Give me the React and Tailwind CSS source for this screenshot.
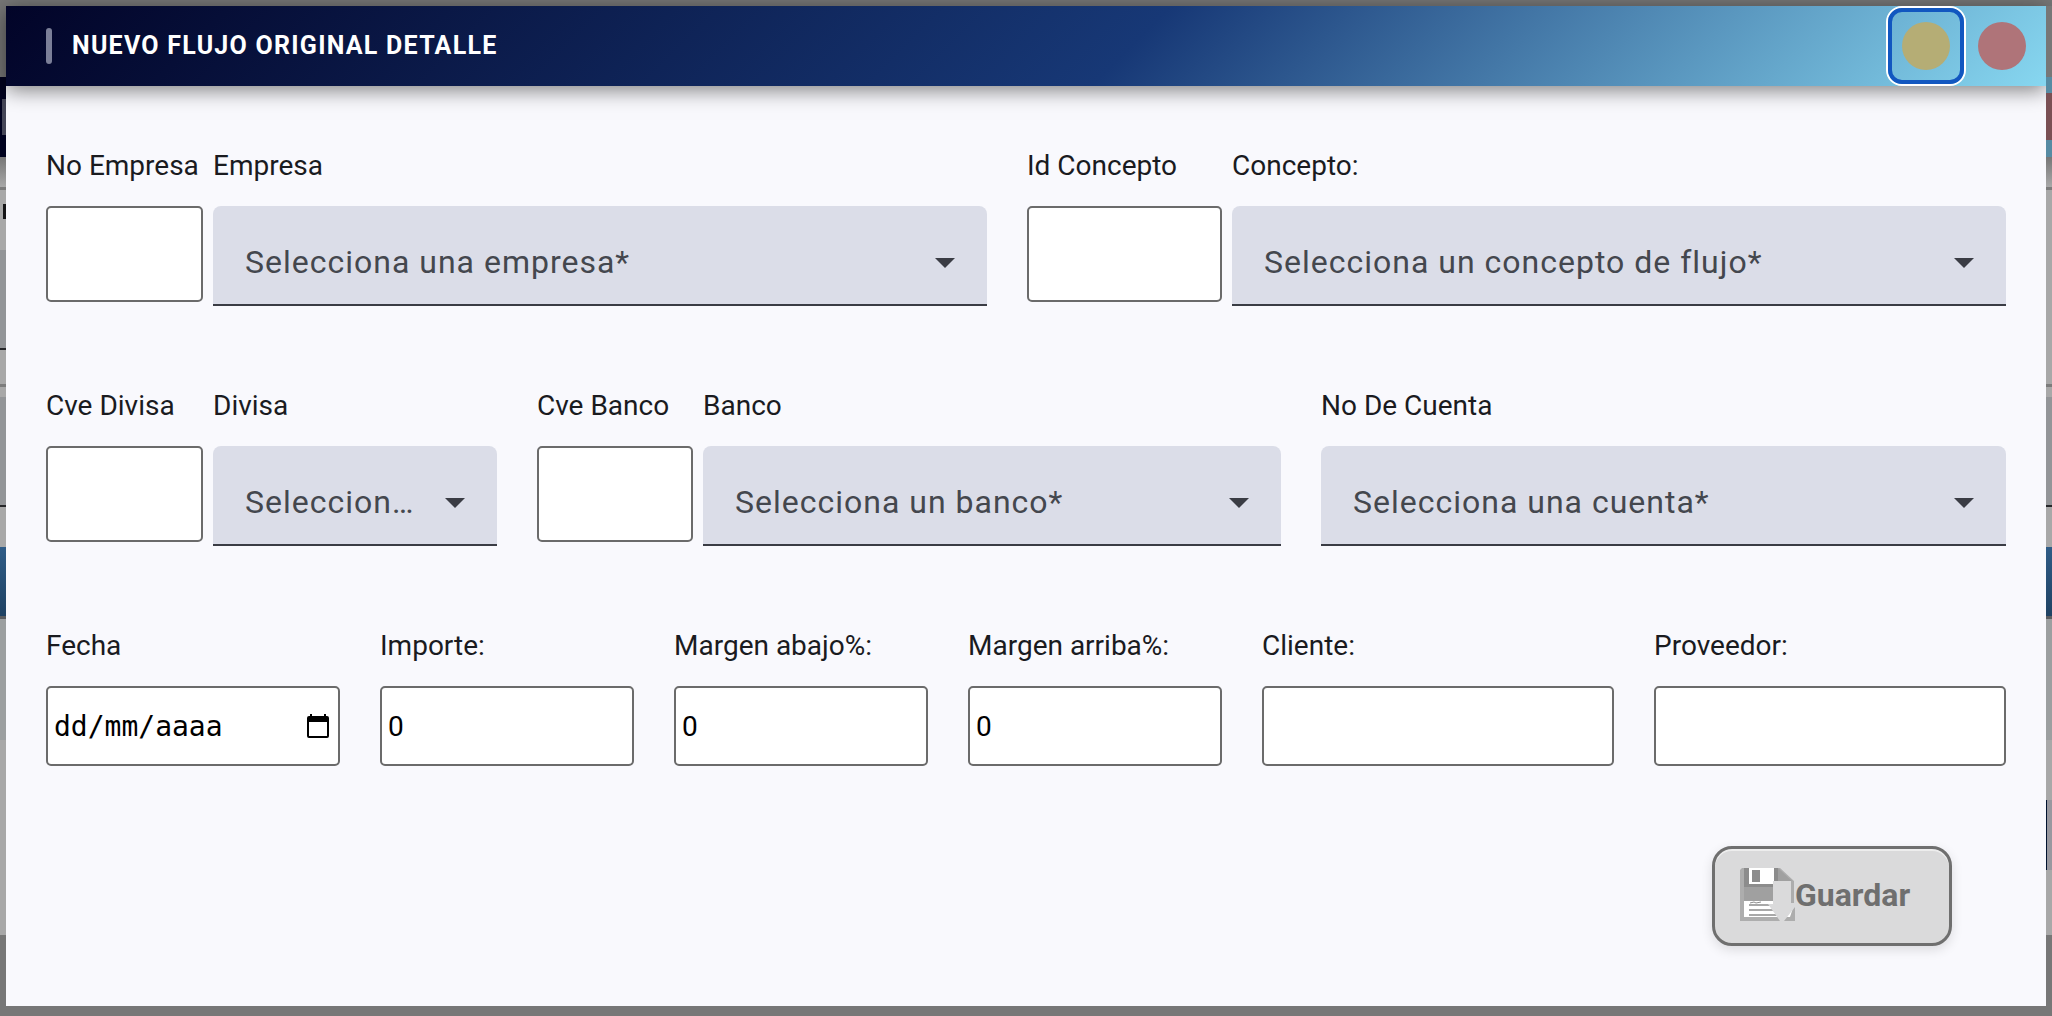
import React from "react";
import { clsx } from "clsx";

// Slices of the dimmed page that stay visible on both sides of the dialog
const leftEdge = [
  "h-[71px] bg-[#777777]",
  "h-[22px] bg-[#00021f]",
  "h-9 border-l-2 border-[#00021f] bg-[#454657]",
  "h-[22px] bg-[#00021f]",
  "h-[30px] bg-linear-to-b from-[#777777] to-[#a8a8a8]",
  "h-[3px] bg-[#7c7c7c]",
  "h-[14px] bg-[#a8a8a8]",
  "h-[15px] border-l-3 border-[#a8a8a8] bg-[#151517]",
  "h-[31px] bg-[#a8a8a8]",
  "h-[98px] bg-[#939598]",
  "h-[2px] bg-[#26272a]",
  "h-[34px] bg-[#a8a8a8]",
  "h-[3px] bg-[#7c7c7c]",
  "h-[10px] bg-[#a8a8a8]",
  "h-[108px] bg-[#939598]",
  "h-[2px] bg-[#26272a]",
  "h-10 bg-[#a8a8a8]",
  "h-[69px] bg-linear-to-b from-[#2f5c87] to-[#1f4263]",
  "h-[3px] bg-[#5b5d60]",
  "h-[121px] bg-[#9c9fa0]",
  "h-[195px] bg-[#a8a8a8]",
  "grow bg-[#777777]",
];

const rightEdge = [
  "h-[71px] bg-[#777777]",
  "h-4 bg-[#568ba3]",
  "h-[47px] bg-[#7a5054]",
  "h-[17px] bg-[#568ba3]",
  "h-[30px] bg-linear-to-b from-[#777777] to-[#a8a8a8]",
  "h-[3px] bg-[#7c7c7c]",
  "h-[194px] bg-[#a8a8a8]",
  "h-[3px] bg-[#7c7c7c]",
  "h-[10px] bg-[#a8a8a8]",
  "h-[108px] bg-[#939598]",
  "h-[2px] bg-[#26272a]",
  "h-10 bg-[#a8a8a8]",
  "h-[69px] bg-linear-to-b from-[#2f5c87] to-[#1f4263]",
  "h-[3px] bg-[#5b5d60]",
  "h-[121px] bg-[#9c9fa0]",
  "h-[60px] bg-[#a8a8a8]",
  "h-[70px] border-l border-[#00132f] bg-[#98989f]",
  "h-[65px] bg-[#a8a8a8]",
  "grow bg-[#777777]",
];

const PageEdge = ({ slices }) => (
  <div className="flex w-[6px] shrink-0 flex-col" aria-hidden="true">
    {slices.map((slice, idx) => (
      <div key={idx} className={slice} />
    ))}
  </div>
);

const Field = ({ id, label, className, children }) => (
  <div className={clsx("flex min-w-0 flex-col gap-[22px]", className)}>
    <label htmlFor={id} className="text-[28px] leading-9 whitespace-nowrap">
      {label}
    </label>
    {children}
  </div>
);

const TextInput = ({ id, tall, ...props }) => (
  <input
    id={id}
    type="text"
    className={clsx(
      "w-full rounded-[5px] border-2 border-[#6b6b6b] bg-white px-[6px] text-[28px] text-black",
      tall ? "h-24" : "h-20"
    )}
    {...props}
  />
);

const SelectInput = ({ id, placeholder }) => (
  <div className="grid">
    <select
      id={id}
      defaultValue=""
      className="col-start-1 row-start-1 h-[100px] w-full appearance-none truncate rounded-t-lg border-b-2 border-[#3a3c44] bg-[#dbdde8] pt-[14px] pr-20 pl-8 text-[32px] tracking-[1px] text-[#44474e]"
    >
      <option value="">{placeholder}</option>
    </select>
    <svg
      className="pointer-events-none col-start-1 row-start-1 mt-[14px] mr-8 h-[10px] w-5 self-center justify-self-end"
      viewBox="0 0 20 10"
      aria-hidden="true"
    >
      <path d="M0 0h20L10 10z" fill="#3a3c44" />
    </svg>
  </div>
);

const DateInput = ({ id }) => (
  <div className="flex h-20 w-full items-center rounded-[5px] border-2 border-[#6b6b6b] bg-white pr-[9px] pl-[6px]">
    <input
      id={id}
      type="text"
      placeholder="dd/mm/aaaa"
      className="w-full min-w-0 grow bg-transparent pt-[2px] font-['DejaVu_Sans_Mono','Liberation_Mono',monospace] text-[28px] text-black placeholder:text-black"
    />
    <button type="button" aria-label="Abrir calendario" className="shrink-0">
      <svg className="h-6 w-[22px]" viewBox="0 0 22 24" aria-hidden="true">
        <path
          d="M3 0h2v2h12V0h2v2h1a2 2 0 0 1 2 2v18a2 2 0 0 1-2 2H2a2 2 0 0 1-2-2V4a2 2 0 0 1 2-2h1zM2 8v14h18V8z"
          fill="#000"
          fillRule="evenodd"
        />
      </svg>
    </button>
  </div>
);

const SaveIcon = () => (
  <svg className="h-[54px] w-[55px] shrink-0" viewBox="0 0 55 54" aria-hidden="true">
    <path d="M2 0h38l14 13v22h1v18H0V2z" fill="#adadad" />
    <path d="M4 19h29v14H4z" fill="#a0a0a0" />
    <path d="M4 0h5v16h29v3H4zM34 0h4v13h-4z" fill="#8c8c8c" />
    <path d="M38 0l14 13H38z" fill="#a0a0a0" />
    <path d="M9 0h25v16H9z" fill="#fff" />
    <path d="M12 2h8v12h-8z" fill="#8c8c8c" />
    <path d="M4 33h40l10 4-4 12H4z" fill="#fff" />
    <path d="M9 37h22M9 42h26M9 47h28" stroke="#8c8c8c" strokeWidth="1.5" />
    <path d="M10 35l4-1 2 1 5-1" stroke="#8c8c8c" fill="none" />
    <path d="M33 13h18v22h4v4L44 53h-4L28 36h5z" fill="#dadadb" />
  </svg>
);

const App = () => {
  return (
    <div className="flex min-h-screen flex-col bg-[#777777] font-[Roboto,sans-serif] text-[#1a1b1f]">
      <div className="h-[6px]" />
      <div className="flex grow">
        <PageEdge slices={leftEdge} />

        <div role="dialog" aria-labelledby="titulo" className="flex min-w-0 grow flex-col bg-[#f9f9fd]">
          {/* Header */}
          <header className="flex h-20 shrink-0 items-center justify-between bg-linear-[135deg,#020428_0%,#173876_55%,#87d7f0_100%] pl-10 shadow-[0_4px_20px_rgba(0,0,0,0.5)]">
            <div className="flex items-center gap-5">
              <span className="h-9 w-[6px] rounded-[3px] bg-[#7b7f98]" />
              <h2 id="titulo" className="text-[25px] leading-10 font-bold tracking-wider text-white">
                NUEVO FLUJO ORIGINAL DETALLE
              </h2>
            </div>
            <div className="flex items-center">
              <button
                type="button"
                aria-label="Minimizar"
                className="flex size-20 items-center justify-center rounded-2xl border-2 border-white"
              >
                <span className="flex size-full items-center justify-center rounded-[14px] border-4 border-[#1257c0]">
                  <span className="size-12 rounded-full bg-[#b5ad75]" />
                </span>
              </button>
              <button type="button" aria-label="Cerrar" className="mr-5 ml-3 size-12 rounded-full bg-[#af7479]" />
            </div>
          </header>

          {/* Form */}
          <form className="flex flex-col px-10 pt-[62px]">
            <div className="flex gap-10">
              <div className="flex min-w-0 flex-[941] gap-[10px]">
                <Field id="noEmpresa" label="No Empresa" className="flex-[157]">
                  <TextInput id="noEmpresa" tall />
                </Field>
                <Field id="empresa" label="Empresa" className="flex-[774]">
                  <SelectInput id="empresa" placeholder="Selecciona una empresa*" />
                </Field>
              </div>
              <div className="flex min-w-0 flex-[979] gap-[10px]">
                <Field id="idConcepto" label="Id Concepto" className="flex-[195]">
                  <TextInput id="idConcepto" tall />
                </Field>
                <Field id="concepto" label="Concepto:" className="flex-[774]">
                  <SelectInput id="concepto" placeholder="Selecciona un concepto de flujo*" />
                </Field>
              </div>
            </div>

            <div className="mt-[82px] flex gap-10">
              <div className="flex min-w-0 flex-[451] gap-[10px]">
                <Field id="cveDivisa" label="Cve Divisa" className="flex-[157]">
                  <TextInput id="cveDivisa" tall />
                </Field>
                <Field id="divisa" label="Divisa" className="flex-[284]">
                  <SelectInput id="divisa" placeholder="Selecciona una divisa*" />
                </Field>
              </div>
              <div className="flex min-w-0 flex-[744] gap-[10px]">
                <Field id="cveBanco" label="Cve Banco" className="flex-[156]">
                  <TextInput id="cveBanco" tall />
                </Field>
                <Field id="banco" label="Banco" className="flex-[578]">
                  <SelectInput id="banco" placeholder="Selecciona un banco*" />
                </Field>
              </div>
              <Field id="cuenta" label="No De Cuenta" className="flex-[685]">
                <SelectInput id="cuenta" placeholder="Selecciona una cuenta*" />
              </Field>
            </div>

            <div className="mt-[82px] flex gap-10">
              <Field id="fecha" label="Fecha" className="flex-[294]">
                <DateInput id="fecha" />
              </Field>
              <Field id="importe" label="Importe:" className="flex-[254]">
                <TextInput id="importe" defaultValue="0" />
              </Field>
              <Field id="margenAbajo" label="Margen abajo%:" className="flex-[254]">
                <TextInput id="margenAbajo" defaultValue="0" />
              </Field>
              <Field id="margenArriba" label="Margen arriba%:" className="flex-[254]">
                <TextInput id="margenArriba" defaultValue="0" />
              </Field>
              <Field id="cliente" label="Cliente:" className="flex-[352]">
                <TextInput id="cliente" />
              </Field>
              <Field id="proveedor" label="Proveedor:" className="flex-[352]">
                <TextInput id="proveedor" />
              </Field>
            </div>

            <button
              type="submit"
              disabled
              className="mt-20 mr-[54px] flex h-[100px] w-60 items-center self-end rounded-[20px] border-[3px] border-[#6f6f6f] bg-[#dadadb] pb-[2px] pl-[25px] text-[32px] font-bold text-[#6f6f6f] shadow-[0_4px_12px_rgba(0,0,0,0.12),inset_0_2px_0_rgba(255,255,255,0.5)]"
            >
              <SaveIcon />
              Guardar
            </button>
          </form>
        </div>

        <PageEdge slices={rightEdge} />
      </div>
      <div className="h-[10px]" />
    </div>
  );
};

export default App;
